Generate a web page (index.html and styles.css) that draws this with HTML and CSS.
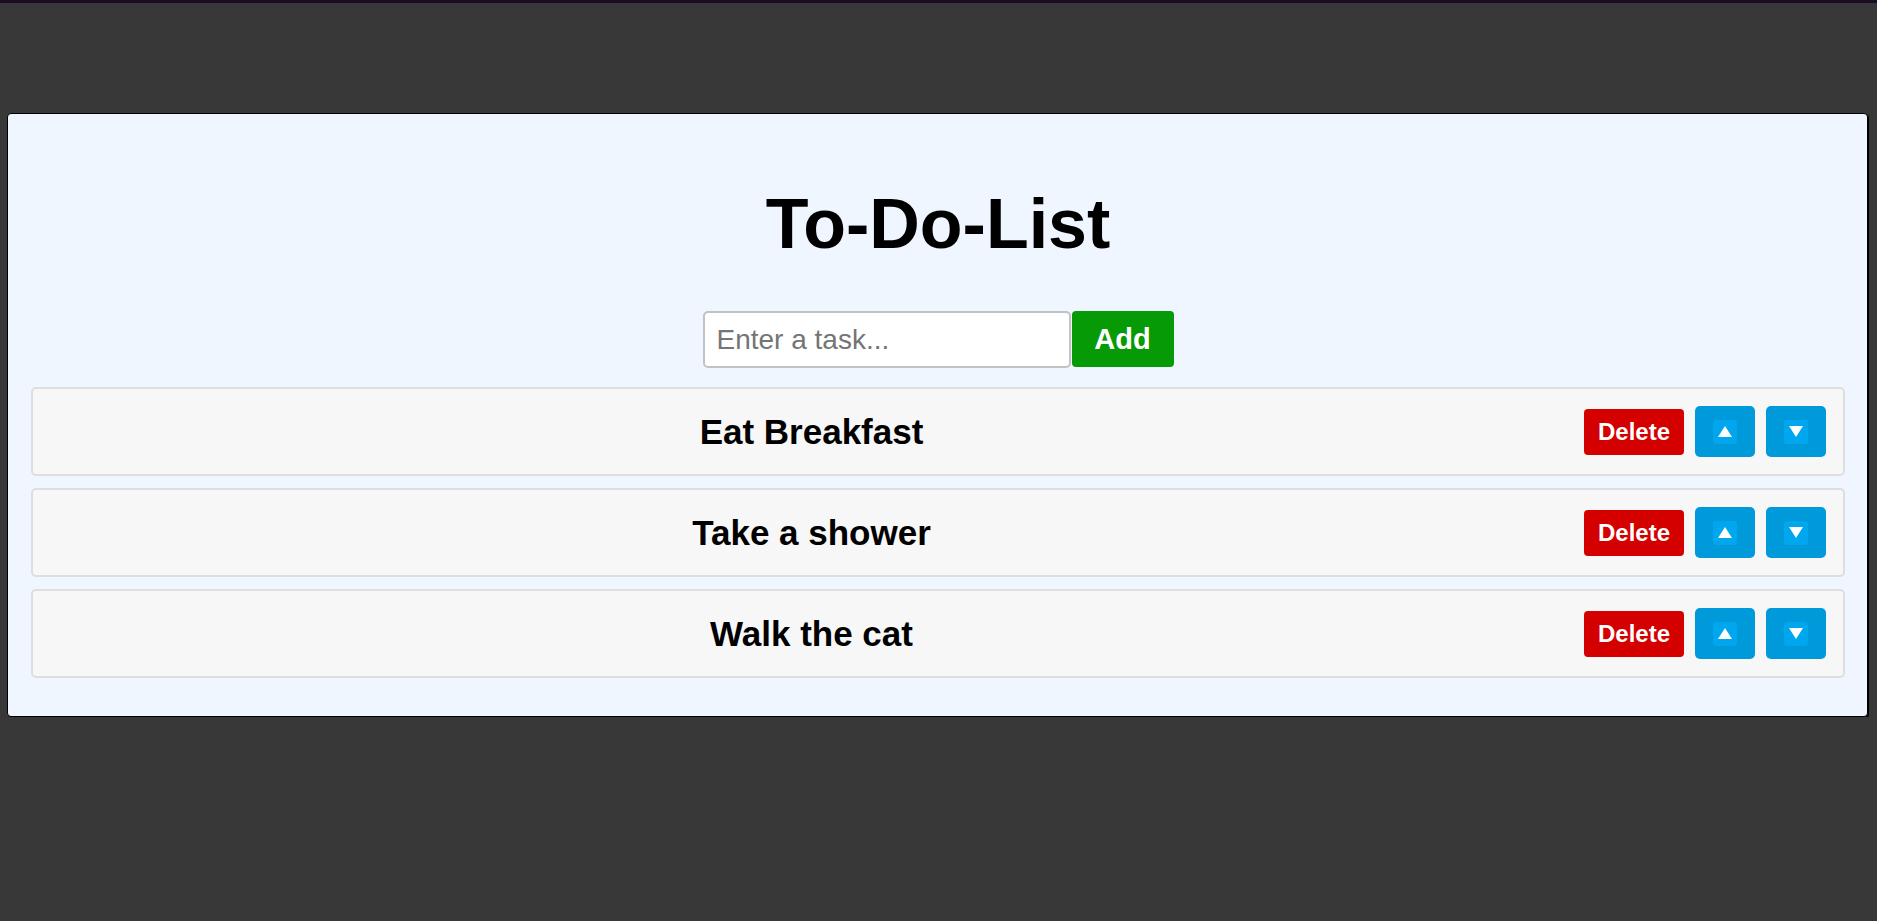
FILE: index.html
```html
<!DOCTYPE html>
<html lang="en">
<head>
<meta charset="utf-8">
<title>To-Do-List</title>
<link rel="stylesheet" href="styles.css">
</head>
<body>
<div class="topbar"></div>
<main class="page">
  <section class="card">
    <h1 class="title">To-Do-List</h1>
    <form class="add-form" onsubmit="return false">
      <input class="task-input" type="text" placeholder="Enter a task...">
      <button class="add-btn" type="button">Add</button>
    </form>
    <ol class="list">
      <li class="item">
        <span class="item-text">Eat Breakfast</span>
        <button class="del-btn" type="button">Delete</button>
        <button class="move-btn" type="button"><span class="emo"><svg viewBox="0 0 14 11" width="14" height="11"><polygon points="7,0 14,11 0,11" fill="#fff"/></svg></span></button>
        <button class="move-btn" type="button"><span class="emo"><svg viewBox="0 0 14 11" width="14" height="11"><polygon points="0,0 14,0 7,11" fill="#fff"/></svg></span></button>
      </li>
      <li class="item">
        <span class="item-text">Take a shower</span>
        <button class="del-btn" type="button">Delete</button>
        <button class="move-btn" type="button"><span class="emo"><svg viewBox="0 0 14 11" width="14" height="11"><polygon points="7,0 14,11 0,11" fill="#fff"/></svg></span></button>
        <button class="move-btn" type="button"><span class="emo"><svg viewBox="0 0 14 11" width="14" height="11"><polygon points="0,0 14,0 7,11" fill="#fff"/></svg></span></button>
      </li>
      <li class="item">
        <span class="item-text">Walk the cat</span>
        <button class="del-btn" type="button">Delete</button>
        <button class="move-btn" type="button"><span class="emo"><svg viewBox="0 0 14 11" width="14" height="11"><polygon points="7,0 14,11 0,11" fill="#fff"/></svg></span></button>
        <button class="move-btn" type="button"><span class="emo"><svg viewBox="0 0 14 11" width="14" height="11"><polygon points="0,0 14,0 7,11" fill="#fff"/></svg></span></button>
      </li>
    </ol>
  </section>
</main>
</body>
</html>
```

FILE: styles.css
```css
* { box-sizing: border-box; }

html, body {
  margin: 0;
  padding: 0;
  background: #383838;
  font-family: "Liberation Sans", Arial, sans-serif;
}

.topbar {
  height: 3px;
  background: #1c0c25;
}

.page {
  padding: 110px 9px 0 7px;
}

.card {
  background: #eff6ff;
  border: 1px solid #000;
  border-radius: 4px;
  box-shadow: 1px 1px 0 #000;
  padding: 70px 22px 38px 23px;
}

.title {
  margin: 0;
  text-align: center;
  font-size: 70px;
  line-height: 80px;
  font-weight: 700;
  color: #000;
}

.add-form {
  display: flex;
  justify-content: center;
  align-items: flex-start;
  margin: 47px 0 19px;
}

.task-input {
  width: 368px;
  height: 57px;
  border: 2px solid #c2c2c2;
  border-radius: 5px;
  background: #fff;
  padding: 0 12px;
  font-family: "Liberation Sans", Arial, sans-serif;
  font-size: 28px;
  color: #222;
  outline: none;
}

.task-input::placeholder {
  color: #757575;
}

.add-btn {
  width: 102px;
  height: 56px;
  margin-left: 1px;
  border: none;
  border-radius: 4px;
  background: #079a07;
  color: #fff;
  font-family: "Liberation Sans", Arial, sans-serif;
  font-size: 29px;
  font-weight: 700;
  padding: 0;
}

.list {
  list-style: none;
  margin: 0;
  padding: 0;
  display: flex;
  flex-direction: column;
  gap: 12px;
}

.item {
  height: 89px;
  display: flex;
  align-items: center;
  background: #f7f7f7;
  border: 2px solid #dedede;
  border-radius: 5px;
  padding: 0 17px 0 16px;
}

.item-text {
  flex: 1;
  text-align: center;
  font-size: 35px;
  font-weight: 700;
  color: #000;
  margin-right: 10px;
}

.del-btn {
  width: 100px;
  height: 46px;
  border: none;
  border-radius: 4px;
  background: #d40000;
  color: #fff;
  font-family: "Liberation Sans", Arial, sans-serif;
  font-size: 24px;
  font-weight: 700;
  padding: 0;
}

.move-btn {
  width: 60px;
  height: 51px;
  margin-left: 11px;
  border: none;
  border-radius: 5px;
  background: #0099da;
  display: flex;
  align-items: center;
  justify-content: center;
  padding: 0;
}

.emo {
  width: 24px;
  height: 24px;
  border-radius: 3px;
  background: #00a7ee;
  display: flex;
  align-items: center;
  justify-content: center;
}

.emo svg {
  display: block;
}
```
